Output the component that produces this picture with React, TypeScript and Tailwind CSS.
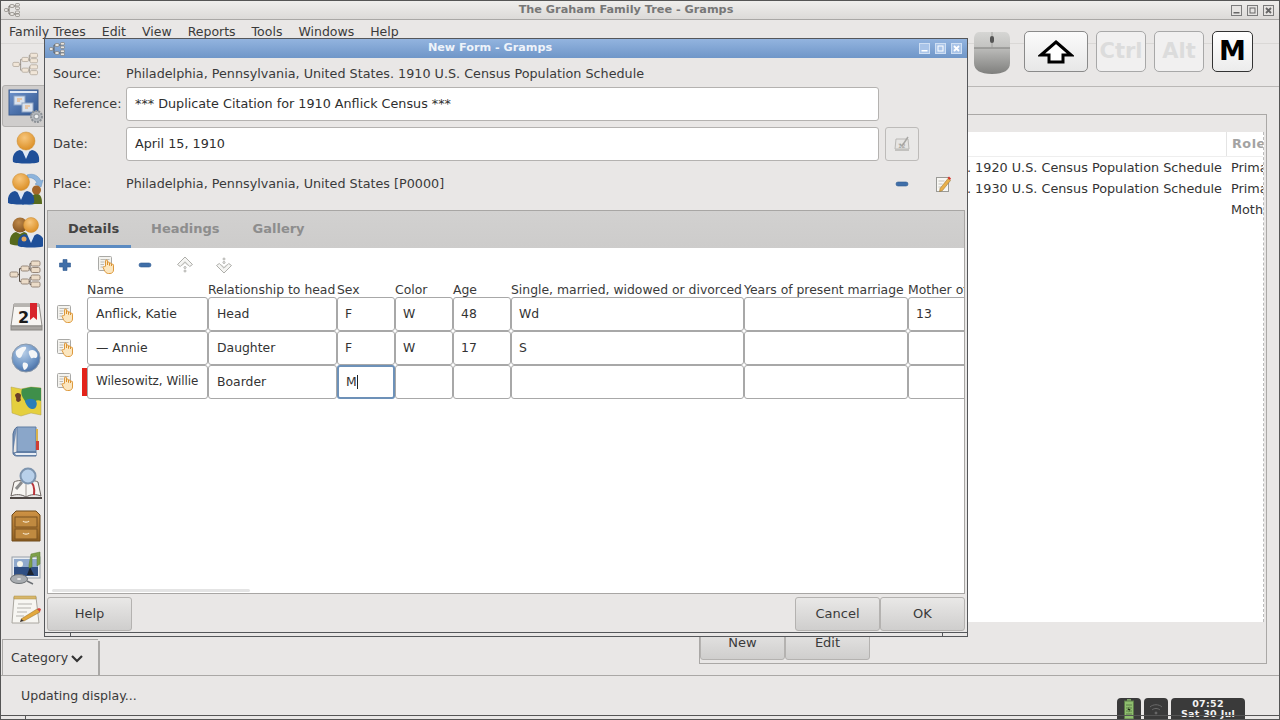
import React from "react";

const Tree = ({ pale = false }: { pale?: boolean }) => {
  const fill = pale ? "#f1e6d8" : "#ecdcc8";
  const st = pale ? "#b5ab9f" : "#96877a";
  const boxes: [number, number, number, number][] = [
    [1, 15, 8, 5], [12, 9, 8, 5], [12, 22, 8, 5], [22, 4, 9, 5], [22, 10.5, 9, 5], [22, 18, 9, 5], [22, 25, 9, 5],
  ];
  const s = pale ? 28 : 34;
  return (
    <svg width={s} height={s} viewBox="0 0 34 34">
      <path d="M9 17.5h1.5M10.5 11.5v13M10.5 11.5h1.5M10.5 24.5h1.5M20 11.5h1M21 6.5v7M21 6.5h1M21 13h1M20 24.5h1M21 20.5v7M21 20.5h1M21 27.5h1" stroke={pale ? "#8a8178" : "#5a5148"} strokeWidth="1" fill="none" />
      {boxes.map((b, i) => (
        <rect key={i} x={b[0]} y={b[1]} width={b[2]} height={b[3]} rx="1.5" fill={fill} stroke={st} />
      ))}
    </svg>
  );
};

const Dashboard = () => (
  <svg width="36" height="36" viewBox="0 0 36 36">
    <defs>
      <linearGradient id="dash" x1="0" y1="0" x2="1" y2="1">
        <stop offset="0" stopColor="#6f93cc" />
        <stop offset="1" stopColor="#2f558f" />
      </linearGradient>
    </defs>
    <rect x="1" y="2" width="29" height="25" fill="url(#dash)" stroke="#3f5f8f" />
    <rect x="2" y="3" width="27" height="2" fill="#dfe7f3" />
    <rect x="6" y="8" width="11" height="9" fill="#d9e2ee" stroke="#8ea4c4" />
    <rect x="14" y="15" width="11" height="9" fill="#d9e2ee" stroke="#8ea4c4" />
    <path d="M9 11h5M9 13h3M17 18h5M17 20h3" stroke="#f0a860" strokeWidth="1" />
    <circle cx="28.5" cy="28.5" r="5.5" fill="#b7bbc0" stroke="#8c9196" strokeWidth="2" strokeDasharray="2 1" />
    <circle cx="28.5" cy="28.5" r="3.2" fill="#9fa4a9" />
    <circle cx="28.5" cy="28.5" r="1.8" fill="#eef0f2" />
  </svg>
);

const PersonBody = ({ id, cx = 17, cy = 11, r = 8 }: { id: string; cx?: number; cy?: number; r?: number }) => (
  <>
    <defs>
      <radialGradient id={id} cx="0.42" cy="0.32" r="0.75">
        <stop offset="0" stopColor="#f7c67c" />
        <stop offset="1" stopColor="#d98a1e" />
      </radialGradient>
    </defs>
    <path d={`M${cx - 13} ${cy + 21}c-1 -7 2 -11 ${7} -12l${6} 3 ${6} -3c5 1 8 5 7 12c-3 2 -23 2 -26 0z`} fill="#1f4f98" />
    <path d={`M${cx - 4} ${cy + 9}l4 9 4 -9-4 2z`} fill="#dfe8f5" />
    <circle cx={cx} cy={cy} r={r} fill={`url(#${id})`} stroke="#c98a2e" strokeWidth="0.5" />
  </>
);

const Person = () => (
  <svg width="34" height="34" viewBox="0 0 34 34">
    <PersonBody id="p1" cy={10} r={9} />
  </svg>
);

const PersonSwitch = () => (
  <svg width="36" height="36" viewBox="0 0 36 36">
    <path d="M19 3c6-2 11 0 14 6l2-1-2 7-6-3 2-1c-2-4-5-6-10-5z" fill="#8db4dc" stroke="#5f8cbc" strokeWidth="0.5" />
    <path d="M31 28c-4 5-10 6-15 3l-1 2-3-6 7-1-1 2c4 2 8 1 11-2z" fill="#6f9bcf" stroke="#4f7cb0" strokeWidth="0.5" />
    <path d="M22 32c0-6 2-9 5-10h3c3 1 4 4 4 10z" fill="#586b1e" />
    <circle cx="28.5" cy="18" r="4.5" fill="#a3662a" />
    <g transform="translate(-3 0)">
      <PersonBody id="p2" cx={16} cy={10} r={8.5} />
    </g>
  </svg>
);

const Family = () => (
  <svg width="34" height="34" viewBox="0 0 34 34">
    <defs>
      <radialGradient id="p3b" cx="0.42" cy="0.32" r="0.75">
        <stop offset="0" stopColor="#c08a4a" />
        <stop offset="1" stopColor="#7e4e1c" />
      </radialGradient>
    </defs>
    <path d="M1 29c-1-7 2-11 6-12l4 2 4-2c4 1 6 5 6 12-5 2-15 2-20 0z" fill="#56691c" />
    <circle cx="11" cy="10" r="7.5" fill="url(#p3b)" />
    <g transform="translate(6 -1)">
      <PersonBody id="p3" cx={16} cy={11} r={7.5} />
    </g>
    <circle cx="15" cy="24" r="2.5" fill="#e5a860" />
  </svg>
);

const CalendarBig = () => (
  <svg width="34" height="34" viewBox="0 0 34 34">
    <path d="M2 27l3-22h25l3 22z" fill="#f7f5f2" stroke="#8f8c88" />
    <rect x="2" y="27" width="31" height="4" fill="#a8a5a1" stroke="#8a8783" />
    <path d="M5 5h25l.5 3H4.600z" fill="#b7b4b0" />
    <text x="9" y="24" fontFamily="'DejaVu Sans',sans-serif" fontWeight="700" fontSize="16" fill="#1b1b1b">2</text>
    <path d="M21 4h7v17l-3.500-3-3.500 3z" fill="#d8242c" />
  </svg>
);

const Globe = () => (
  <svg width="32" height="32" viewBox="0 0 32 32">
    <defs>
      <radialGradient id="gl" cx="0.4" cy="0.3" r="0.8">
        <stop offset="0" stopColor="#b9cfe8" />
        <stop offset="0.6" stopColor="#6d94c4" />
        <stop offset="1" stopColor="#3f6399" />
      </radialGradient>
    </defs>
    <circle cx="16" cy="16" r="14" fill="url(#gl)" stroke="#8b99aa" />
    <path d="M6 9c3-3 7-5 10-4 1 2-2 4-3 6-1 3-2 5-4 5-2-1-4-4-3-7zM19 9c3-2 6-1 8 2 1 3 0 5-2 5-2-1-3 1-4 0-1-2-3-5-2-7zM13 21c2-1 5 0 5 2 0 2-2 5-4 5-1-2-2-5-1-7z" fill="#f4f6f8" />
  </svg>
);

const MapIcon = () => (
  <svg width="34" height="34" viewBox="0 0 34 34">
    <path d="M2 4l10 2 10-2 10 1 0 27-10-2-10 3-9-3z" fill="#e5cf3e" stroke="#b0a14e" strokeWidth="0.5" />
    <path d="M13 6l9-2 10 1v13c-4-2-6 0-8 3-3 3-7 0-8-3-2-3-5-7-3-12z" fill="#3f8f4a" />
    <path d="M16 18c3-3 8-3 11 0 2 3 0 9-4 8-3 0-6-4-7-8z" fill="#2a7db8" />
    <path d="M6 12c2-3 5-2 6 0 0 2-1 3 0 5-1 2-4 3-5 0 1-2-1-3-1-5z" fill="#6a3f2a" />
  </svg>
);

const Book = () => (
  <svg width="30" height="32" viewBox="0 0 30 32">
    <path d="M6 1h19v25H6z" fill="#8aa6c9" stroke="#5f7ca3" />
    <path d="M25 3h2v12h-2z" fill="#d9b24a" />
    <path d="M25 15h3v9h-3z" fill="#cf3d33" />
    <path d="M6 1C3 3 3 5 2 8v19c0 2 2 3 4 3h19v-4H6c-1 0-2 1-4 1" fill="#7691b6" stroke="#4f6c94" />
    <path d="M4 27h21v2H5z" fill="#e8edf4" />
  </svg>
);

const BookSearch = () => (
  <svg width="34" height="34" viewBox="0 0 34 34">
    <path d="M2 29l3-14c4-2 8-2 12 1 4-3 8-3 12-1l3 14c-5-2-10-2-15 1-5-3-10-3-15-1z" fill="#f7f5f2" stroke="#6b6460" />
    <path d="M1 30h32v2H1z" fill="#4f4845" />
    <path d="M17 16v13" stroke="#a19a95" />
    <path d="M19 12c5 3 7 8 6 16" stroke="#b8343a" strokeWidth="2" fill="none" />
    <path d="M13 15l-6 7" stroke="#8c8c8c" strokeWidth="3" />
    <circle cx="19" cy="9" r="7.500" fill="#b8d0ea" stroke="#7d94ae" strokeWidth="2" />
  </svg>
);

const Cabinet = () => (
  <svg width="30" height="32" viewBox="0 0 30 32">
    <defs>
      <linearGradient id="cab" x1="0" y1="0" x2="0" y2="1">
        <stop offset="0" stopColor="#cf9345" />
        <stop offset="1" stopColor="#8f5f20" />
      </linearGradient>
    </defs>
    <path d="M5 1h20l4 4v26H1V5z" fill="url(#cab)" stroke="#6e4a1b" />
    <rect x="4" y="7" width="22" height="10" fill="#c08a40" stroke="#7a5320" />
    <rect x="4" y="19" width="22" height="10" fill="#c08a40" stroke="#7a5320" />
    <path d="M12 11c1 1.500 5 1.500 6 0M12 23c1 1.500 5 1.500 6 0" stroke="#f7ead0" strokeWidth="1.200" fill="none" />
  </svg>
);

const Media = () => (
  <svg width="34" height="34" viewBox="0 0 34 34">
    <rect x="3" y="6" width="28" height="21" fill="#e9edf2" stroke="#98a0a8" />
    <rect x="5" y="8" width="24" height="17" fill="#2f4f83" />
    <path d="M5 8h24v8H5z" fill="#8fa9cc" />
    <circle cx="11" cy="13" r="3" fill="#f6f6ec" />
    <path d="M18 24l3-8 4 8z" fill="#1c2430" />
    <path d="M22 3l9-2v12l-3 2v-10l-5 1v10l-3 1v-3z" fill="#7ea04a" stroke="#5a7a30" strokeWidth="0.5" />
    <ellipse cx="10" cy="28" rx="8.500" ry="4.500" fill="#a8acb0" stroke="#6c7074" />
    <ellipse cx="10" cy="28" rx="2" ry="1" fill="#e8e8e8" />
    <path d="M18 30l6 3" stroke="#6c7074" strokeWidth="1.500" />
  </svg>
);

const Note = () => (
  <svg width="32" height="32" viewBox="0 0 32 32">
    <path d="M4 3h22l3 26H2z" fill="#f7f6f2" stroke="#aaa7a0" />
    <path d="M4 2h22v3H4z" fill="#d7b66a" stroke="#a98c44" strokeWidth="0.5" />
    <path d="M8 10h14M7 14h14M7 18h10M6 22h8" stroke="#b5b3ae" />
    <path d="M11 25l16-10 3 3-16 9z" fill="#e3a83c" stroke="#8f6a2a" strokeWidth="0.5" />
    <path d="M27 15l3 3 1-3-2-1z" fill="#d6463c" />
    <path d="M11 25l3 2-4 1z" fill="#3a3028" />
  </svg>
);

const HandDoc = () => (
  <svg width="18" height="18" viewBox="0 0 18 18">
    <rect x="0.500" y="0.500" width="13" height="14" rx="1" fill="#f4f3ef" stroke="#a9a9a6" />
    <path d="M2.500 3.500h9M2.500 6h4M2.500 8.500h3.500M2.500 11h3" stroke="#bdbbb4" />
    <path d="M7.500 10V5a1 1 0 0 1 2 0V9V7a1 1 0 0 1 2 0V9.500V8a1 1 0 0 1 2 0V10V9.200a1 1 0 0 1 2 0V14c0 2-1.500 3.500-3.500 3.500h-1.500c-2 0-3-1-4-3l-1.300-2.800c-.5-1 1-1.700 1.600-.8z" fill="#fbe6bf" stroke="#d98f2a" strokeWidth="0.9" />
  </svg>
);

const Plus = () => (
  <svg width="14" height="14" viewBox="0 0 14 14">
    <path d="M5 1.500h4V5h3.500v4H9v3.500H5V9H1.500V5H5z" fill="#3f6ea8" stroke="#2f5a90" strokeWidth="0.6" />
  </svg>
);

const Minus = () => (
  <svg width="14" height="6" viewBox="0 0 14 6">
    <rect x="1" y="1" width="12" height="4" rx="2" fill="#3f6ea8" stroke="#2f5a90" strokeWidth="0.6" />
  </svg>
);

const ArrowUp = () => (
  <svg width="18" height="18" viewBox="0 0 18 18">
    <path d="M1.500 8.500L9 1l7.500 7.500-2.800 2L9 5.800l-4.700 4.700z" fill="#f5f5f3" stroke="#aeaeaa" />
    <path d="M6 9.500l3-3 3 3" fill="none" stroke="#c6c6c2" />
    <circle cx="9" cy="11.500" r="1" fill="none" stroke="#aeaeaa" />
    <circle cx="9" cy="15" r="1" fill="none" stroke="#aeaeaa" />
  </svg>
);

const ArrowDown = () => (
  <svg width="18" height="18" viewBox="0 0 18 18">
    <path d="M1.500 9.500L9 17l7.500-7.500-2.800-2L9 12.200 4.300 7.500z" fill="#f5f5f3" stroke="#aeaeaa" />
    <path d="M6 8.500l3 3 3-3" fill="none" stroke="#c6c6c2" />
    <circle cx="9" cy="6.500" r="1" fill="none" stroke="#aeaeaa" />
    <circle cx="9" cy="3" r="1" fill="none" stroke="#aeaeaa" />
  </svg>
);

const SmallTree = () => (
  <svg width="16" height="14" viewBox="0 0 16 14">
    <path d="M3 7h2M5 3v8M5 3h2M5 11h2M10 3h2M10 11h2" stroke="#55504a" strokeWidth="0.8" fill="none" />
    <rect x="0.500" y="5.500" width="3.500" height="3" rx="1" fill="#e5e3df" stroke="#77726c" strokeWidth="0.6" />
    <rect x="6" y="1.500" width="4" height="3" rx="1" fill="#e5e3df" stroke="#77726c" strokeWidth="0.6" />
    <rect x="6" y="9.500" width="4" height="3" rx="1" fill="#e5e3df" stroke="#77726c" strokeWidth="0.6" />
    <rect x="11.500" y="0.500" width="4" height="2.500" rx="1" fill="#e5e3df" stroke="#77726c" strokeWidth="0.6" />
    <rect x="11.500" y="4" width="4" height="2.500" rx="1" fill="#e5e3df" stroke="#77726c" strokeWidth="0.6" />
    <rect x="11.500" y="8" width="4" height="2.500" rx="1" fill="#e5e3df" stroke="#77726c" strokeWidth="0.6" />
    <rect x="11.500" y="11" width="4" height="2.500" rx="1" fill="#e5e3df" stroke="#77726c" strokeWidth="0.6" />
  </svg>
);

const WinBtn = ({ kind, blue = false }: { kind: "min" | "max" | "close"; blue?: boolean }) => {
  const bg = blue ? "#a9c4e8" : "#e6e4e2";
  const st = blue ? "#cfdff3" : "#7b7b7b";
  const ink = blue ? "#ffffff" : "#666666";
  return (
    <svg width="11" height="11" viewBox="0 0 11 11">
      <rect x="0.500" y="0.500" width="10" height="10" fill={bg} stroke={st} />
      {kind === "min" && <rect x="2.500" y="7" width="6" height="1.500" fill={ink} />}
      {kind === "max" && <rect x="3" y="3" width="5" height="5" fill="none" stroke={ink} />}
      {kind === "close" && <path d="M3 3l5 5M8 3l-5 5" stroke={ink} strokeWidth="1.800" />}
    </svg>
  );
};

const Mouse = () => (
  <svg width="38" height="44" viewBox="0 0 38 44">
    <defs>
      <linearGradient id="ms" x1="0" y1="0" x2="0" y2="1">
        <stop offset="0" stopColor="#d6d6d4" />
        <stop offset="0.38" stopColor="#c2c2c0" />
        <stop offset="0.42" stopColor="#b8b8b6" />
        <stop offset="1" stopColor="#7f7f7d" />
      </linearGradient>
    </defs>
    <path d="M6 1h26c3 0 5 3 5 7v24c0 7-6 11-18 11S1 39 1 32V8c0-4 2-7 5-7z" fill="url(#ms)" />
    <path d="M1 17h36" stroke="#7a7a78" strokeWidth="1" />
    <path d="M19 1v16" stroke="#9a9a98" strokeWidth="0.8" />
    <rect x="17" y="5" width="4" height="7" rx="2" fill="#555" />
  </svg>
);

const ShiftArrow = () => (
  <svg width="36" height="24" viewBox="0 0 36 24">
    <path d="M18 2L33 15H25V22H11V15H3z" fill="#ffffff" stroke="#000000" strokeWidth="3" strokeLinejoin="miter" />
  </svg>
);

const CalButtonIcon = () => (
  <svg width="18" height="18" viewBox="0 0 18 18">
    <path d="M2 14l1-10h12l1 10z" fill="#e6e5e3" stroke="#b9b8b5" />
    <rect x="2" y="14" width="14" height="2" fill="#c2c1be" />
    <path d="M7 9l2 2 6-9" stroke="#a8a7a4" strokeWidth="1.500" fill="none" />
    <text x="5" y="13" fontSize="6" fill="#9c9b98" fontFamily="'DejaVu Sans',sans-serif">12</text>
  </svg>
);

const EditIcon = () => (
  <svg width="16" height="18" viewBox="0 0 16 18">
    <rect x="1.500" y="2.500" width="12" height="14" fill="#f8f7f3" stroke="#9a9a96" />
    <path d="M3.500 6h6M3.500 9h4M3.500 12h3" stroke="#c4c2bc" />
    <path d="M5 13.500l8-10 2.500 2-8 10-3 1z" fill="#e9b04a" stroke="#8f6a2a" strokeWidth="0.5" />
    <path d="M12.500 3l2.500 2 1-1.500-2-2z" fill="#d6362c" />
  </svg>
);

const btn =
  "h-[34px] flex items-center justify-center rounded-[3px] border border-[#b4b2b0] bg-gradient-to-b from-[#e9e8e7] to-[#cfcecd] text-[13px] text-[#3a3a3a]";

const sideIcons = [
  <Tree pale key="0" />, <Dashboard key="1" />, <Person key="2" />, <PersonSwitch key="3" />, <Family key="4" />,
  <Tree key="5" />, <CalendarBig key="6" />, <Globe key="7" />, <MapIcon key="8" />, <Book key="9" />,
  <BookSearch key="10" />, <Cabinet key="11" />, <Media key="12" />, <Note key="13" />,
];

const menus = ["Family Trees", "Edit", "View", "Reports", "Tools", "Windows", "Help"];

const headers = ["Name", "Relationship to head", "Sex", "Color", "Age", "Single, married, widowed or divorced", "Years of present marriage", "Mother of how many children"];
const tableRows = [
  ["Anflick, Katie", "Head", "F", "W", "48", "Wd", "", "13"],
  ["— Annie", "Daughter", "F", "W", "17", "S", "", ""],
  ["Wilesowitz, Willie", "Boarder", "M", "", "", "", "", ""],
];

const grid = "grid grid-cols-[121px_129px_58px_58px_58px_233px_164px_70px]";

export default function App() {
  return (
    <div className="relative w-[1280px] h-[720px] overflow-hidden flex flex-col bg-[#e9e7e6] border-x border-[#555] text-[13px] text-[#3a3a3a] font-['DejaVu_Sans',sans-serif]">
      {/* main window title */}
      <div className="h-[20px] shrink-0 flex items-center border-t border-b border-t-[#555] border-b-[#a9a7a5] bg-gradient-to-b from-[#efeeec] to-[#dcdad8]">
        <div className="w-[20px] pl-[3px] flex"><SmallTree /></div>
        <div className="flex-1 text-center text-[11.25px] font-bold text-[#777] leading-none">The Graham Family Tree - Gramps</div>
        <div className="flex gap-[5px] pr-[5px]">
          <WinBtn kind="min" />
          <WinBtn kind="max" />
          <WinBtn kind="close" />
        </div>
      </div>
      {/* menu */}
      <div className="h-[24px] shrink-0 flex items-center gap-[16px] pl-[8px] pt-[2px] border-b border-[#dad8d6] text-[12.5px]">
        {menus.map((m) => (
          <span key={m}>{m}</span>
        ))}
      </div>
      {/* body */}
      <div className="flex-1 flex min-h-0">
        <div className="w-[97px] shrink-0 flex flex-col">
          <div className="h-[596px] -mt-px pl-px">
            {sideIcons.map((ic, i) => (
              <div
                key={i}
                className={
                  "h-[42px] w-[48px] flex items-center justify-center rounded-[3px] " +
                  (i === 1 ? "bg-[#cfcdcc] border border-[#b3b1af]" : "")
                }
              >
                {ic}
              </div>
            ))}
          </div>
          <div className="h-[36px] mt-[1px] ml-px border-l border-t border-[#aaa8a6] flex items-center pl-[8px] pt-[2px] gap-[2px] text-[12.5px]">
            <span>Category</span>
            <svg width="14" height="10" viewBox="0 0 14 10">
              <path d="M2 2l5 5 5-5" stroke="#333" strokeWidth="2.200" fill="none" />
            </svg>
          </div>
        </div>
        <div className="flex-1 flex flex-col min-w-0 border-l-2 border-[#aaa8a6] [border-image:linear-gradient(to_bottom,transparent_596px,#aaa8a6_596px)_1]">
          <div className="h-[43px] shrink-0 border-b border-[#bab8b6]" />
          <div className="mt-[27px] ml-[599px] mr-[12px] h-[550px] border border-[#aaa8a6] flex flex-col">
            <div className="h-[17px] shrink-0" />
            <div className="h-[490px] shrink-0 bg-white border-r border-dashed border-r-[#bbb] mr-[2px] text-[12.8px]">
              <div className="h-[25px] flex border-b border-[#eeeeee]">
                <div className="flex-1" />
                <div className="w-[37px] border-l border-[#e4e4e4] pl-[5px] pb-[1px] font-bold text-[#a3a3a3] flex items-center tracking-[0.5px] overflow-hidden">Role</div>
              </div>
              {[
                [". 1920 U.S. Census Population Schedule", "Primary"],
                [". 1930 U.S. Census Population Schedule", "Primary"],
                ["", "Mother"],
              ].map((r, i) => (
                <div key={i} className="h-[21px] flex items-center text-[#333]">
                  <div className="flex-1 text-right whitespace-nowrap pr-[9px]">{r[0]}</div>
                  <div className="w-[32px] overflow-hidden whitespace-nowrap">{r[1]}</div>
                </div>
              ))}
            </div>
            <div className="flex mt-[4px]">
              <div className={btn + " w-[85px]"}>New</div>
              <div className={btn + " w-[85px]"}>Edit</div>
            </div>
          </div>
        </div>
      </div>
      {/* status */}
      <div className="h-[40px] shrink-0 border-t border-[#aaa8a6] flex items-center pl-[20px] pt-[2px] text-[12.55px]">Updating display...</div>
      <div className="h-[5px] shrink-0 border-y border-[#555] flex relative z-10">
        <div className="w-[25px] border-r border-[#555]" />
      </div>

      {/* Dialog window */}
      <div className="absolute left-[43px] top-[38px] w-[924px] h-[599px] border border-[#55575a] bg-[#e9e7e6] flex flex-col">
        <div className="h-[19px] shrink-0 flex items-center bg-gradient-to-b from-[#93b4df] to-[#6f96c8]">
          <div className="pl-[4px] flex"><SmallTree /></div>
          <div className="flex-1 text-center text-[11.2px] font-bold text-[#eef3fa] leading-none pr-[4px] pb-[2px]">New Form - Gramps</div>
          <div className="flex gap-[5px] pr-[5px]">
            <WinBtn kind="min" blue />
            <WinBtn kind="max" blue />
            <WinBtn kind="close" blue />
          </div>
        </div>
        <div className="h-[29px] shrink-0 flex items-center pl-[8px] pt-[2px] text-[12.75px]">
          <span className="w-[73px]">Source:</span>
          <span>Philadelphia, Pennsylvania, United States. 1910 U.S. Census Population Schedule</span>
        </div>
        <div className="h-[34px] shrink-0 flex items-center pl-[8px] text-[12.75px]">
          <span className="w-[73px]">Reference:</span>
          <div className="w-[753px] h-[34px] bg-white border border-[#b4b2b0] rounded-[3px] flex items-center pl-[8px] text-[#2e2e2e]">*** Duplicate Citation for 1910 Anflick Census ***</div>
        </div>
        <div className="h-[34px] mt-[6px] shrink-0 flex items-center pl-[8px] text-[12.75px]">
          <span className="w-[73px]">Date:</span>
          <div className="w-[753px] h-[34px] bg-white border border-[#b4b2b0] rounded-[3px] flex items-center pl-[8px] text-[#2e2e2e]">April 15, 1910</div>
          <div className="ml-[6px] w-[34px] h-[34px] rounded-[3px] border border-[#bdbbb9] bg-[#e9e8e7] flex items-center justify-center"><CalButtonIcon /></div>
        </div>
        <div className="h-[44px] shrink-0 flex items-center pl-[8px] pt-[2px] text-[12.75px]">
          <span className="w-[73px]">Place:</span>
          <span className="flex-1">Philadelphia, Pennsylvania, United States [P0000]</span>
          <span className="flex mr-[26px]"><Minus /></span>
          <span className="flex mr-[16px]"><EditIcon /></span>
        </div>
        <div className="mt-[5px] ml-[2px] mr-[2px] h-[384px] shrink-0 border border-[#a8a6a4] flex flex-col">
          <div className="h-[37px] shrink-0 bg-gradient-to-b from-[#d2d1d0] to-[#cdcccb] flex font-bold text-[13px]">
            <div className="ml-[8px] w-[75px] pt-[1px] border-b-[3px] border-[#5b8bc2] flex items-center justify-center text-[#444]">Details</div>
            <div className="ml-[20px] pb-[2px] flex items-center text-[#8d8d8d]">Headings</div>
            <div className="ml-[33px] pb-[2px] flex items-center text-[#8d8d8d]">Gallery</div>
          </div>
          <div className="flex-1 bg-white relative overflow-hidden flex flex-col text-[12.4px]">
            <div className="h-[34px] shrink-0 flex items-center pl-[10px]">
              <span className="flex w-[14px]"><Plus /></span>
              <span className="flex ml-[26px]"><HandDoc /></span>
              <span className="flex ml-[22px]"><Minus /></span>
              <span className="flex ml-[24px]"><ArrowUp /></span>
              <span className="flex ml-[21px]"><ArrowDown /></span>
            </div>
            <div className="flex">
              <div className="w-[39px] shrink-0" />
              <div className={grid + " h-[15px] pt-[2px] items-center whitespace-nowrap leading-none"}>
                {headers.map((h) => (
                  <span key={h} className="min-w-0">{h}</span>
                ))}
              </div>
            </div>
            {tableRows.map((r, i) => (
              <div key={i} className="flex h-[34px]">
                <div className="w-[39px] shrink-0 flex items-center pl-[9px] relative">
                  <HandDoc />
                  {i === 2 && <div className="absolute right-0 top-[3px] w-[5px] h-[28px] bg-[#e3231a]" />}
                </div>
                <div className={grid}>
                  {r.map((c, j) => {
                    const focus = i === 2 && j === 2;
                    return (
                      <div
                        key={j}
                        className={
                          "h-[34px] flex items-center rounded-[3px] text-[#333] whitespace-nowrap " +
                          (j < 2 ? "pl-[8px] " : "pl-[7px] ") +
                          (i === 2 && j === 0 ? "text-[11.9px] " : "") +
                          (focus
                            ? "border-2 border-[#6d91b8]"
                            : "border border-[#a8a8a8]")
                        }
                      >
                        {c}
                        {focus && <span className="w-px h-[14px] bg-[#222]" />}
                      </div>
                    );
                  })}
                </div>
              </div>
            ))}
            <div className="absolute left-[4px] bottom-[1px] w-[198px] h-[3px] bg-[#e4e4e4] rounded-[2px]" />
          </div>
        </div>
        <div className="mt-[3px] ml-[2px] mr-[2px] flex justify-between">
          <div className={btn + " w-[85px]"}>Help</div>
          <div className="flex">
            <div className={btn + " w-[85px]"}>Cancel</div>
            <div className={btn + " w-[85px]"}>OK</div>
          </div>
        </div>
        <div className="mt-auto h-[4px] border-t border-[#55575a] flex justify-between">
          <div className="w-[26px] border-r border-[#55575a]" />
          <div className="w-[25px] border-l border-[#55575a]" />
        </div>
      </div>

      {/* screenkey overlay */}
      <div className="absolute left-[972px] top-[31px] flex items-start">
        <div className="flex"><Mouse /></div>
        <div className="ml-[13px] w-[64px] h-[41px] rounded-[5px] border border-[#8a8a8a] bg-gradient-to-b from-[#fbfbfb] to-[#e7e7e7] flex items-center justify-center"><ShiftArrow /></div>
        <div className="ml-[8px] w-[50px] h-[41px] rounded-[5px] border border-[#a8a8a8] bg-[#f1f0f0] flex items-center justify-center font-bold text-[21px] text-[#dcdcdc]">Ctrl</div>
        <div className="ml-[8px] w-[50px] h-[41px] rounded-[5px] border border-[#a8a8a8] bg-[#f1f0f0] flex items-center justify-center font-bold text-[21px] text-[#dcdcdc]">Alt</div>
        <div className="ml-[8px] w-[41px] h-[41px] rounded-[5px] border border-[#333] bg-gradient-to-b from-white to-[#ececec] flex items-center justify-center font-bold text-[27px] text-black">M</div>
      </div>

      {/* tray */}
      <div className="absolute left-[1116px] top-[698px] h-[22px] flex gap-[3px]">
        <div className="w-[24px] h-[22px] bg-[#3a3a3a] rounded-t-[4px] flex items-center justify-center">
          <svg width="10" height="20" viewBox="0 0 10 20">
            <rect x="3" y="0" width="4" height="2" fill="#7fa36a" />
            <rect x="0.500" y="2" width="9" height="18" fill="#8fbf6e" stroke="#5d7c48" />
            <path d="M2 6h6M2 9h6M2 12h6M2 15h6" stroke="#5d7c48" />
            <path d="M5.500 7l-2 4h2l-1 3 2-4h-2z" fill="#1d2a12" />
          </svg>
        </div>
        <div className="w-[24px] h-[22px] bg-[#3a3a3a] rounded-t-[4px] flex items-center justify-center">
          <svg width="14" height="14" viewBox="0 0 14 14" fill="none" stroke="#6a6a6a">
            <path d="M1 5c3-3 9-3 12 0M3 8c2-2 6-2 8 0" />
            <circle cx="7" cy="11" r="1" fill="#6a6a6a" />
          </svg>
        </div>
        <div className="w-[74px] h-[22px] bg-[#3a3a3a] rounded-t-[4px] flex flex-col items-center justify-center text-[9.5px] leading-[10px] font-bold text-[#f2f2f2] tracking-[0.3px]">
          <span>07:52</span>
          <span>Sat 30 Jul</span>
        </div>
      </div>
    </div>
  );
}
